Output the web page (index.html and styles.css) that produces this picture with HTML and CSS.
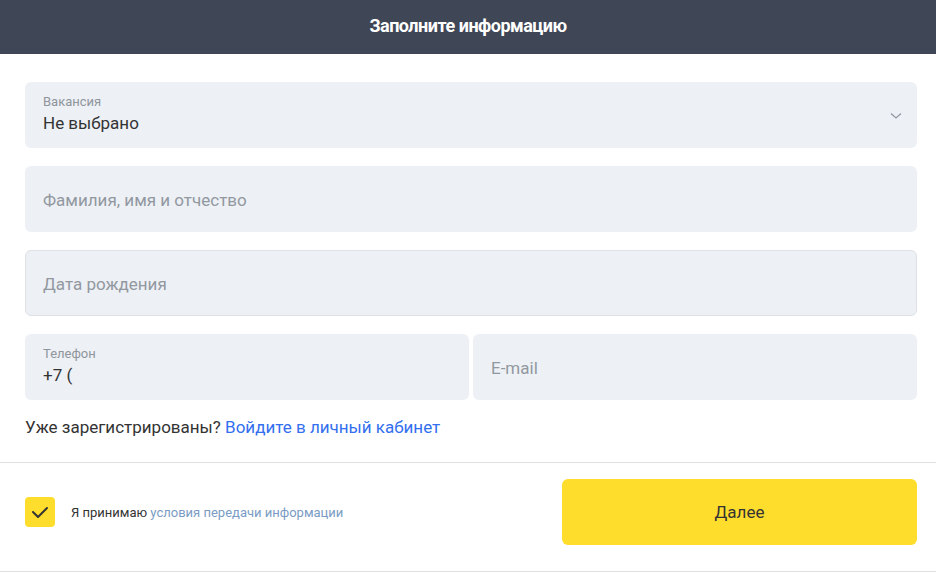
FILE: index.html
```html
<!DOCTYPE html>
<html lang="ru">
<head>
<meta charset="utf-8">
<link rel="stylesheet" href="styles.css">
</head>
<body>
<header class="top">Заполните информацию</header>
<main class="form">
  <div class="fields">
    <div class="field field-select">
      <div class="field-inner">
        <div class="label">Вакансия</div>
        <div class="value">Не выбрано</div>
      </div>
      <svg class="chev" width="12" height="8" viewBox="0 0 12 8"><path d="M1 1.5 L6 6 L11 1.5" fill="none" stroke="#9299a2" stroke-width="1.3"/></svg>
    </div>
    <div class="field"><div class="placeholder">Фамилия, имя и отчество</div></div>
    <div class="field field-bordered"><div class="placeholder">Дата рождения</div></div>
    <div class="row">
      <div class="field">
        <div class="field-inner">
          <div class="label">Телефон</div>
          <div class="value">+7 (</div>
        </div>
      </div>
      <div class="field"><div class="placeholder">E-mail</div></div>
    </div>
  </div>
  <p class="login">Уже зарегистрированы? <a class="link" href="#">Войдите в личный кабинет</a></p>
</main>
<footer class="bottom">
  <div class="agree">
    <span class="check"><svg width="18" height="14" viewBox="0 0 18 14"><path d="M2 7 L7 12 L16 3" fill="none" stroke="#333" stroke-width="2" stroke-linecap="round" stroke-linejoin="round"/></svg></span>
    <span class="agree-text">Я принимаю <a class="link-soft" href="#">условия передачи информации</a></span>
  </div>
  <button class="btn">Далее</button>
</footer>
</body>
</html>
```
FILE: styles.css
```css
* { box-sizing: border-box; }
html, body { margin: 0; padding: 0; background: #fff; }
body { font-family: Roboto, "Liberation Sans", Arial, sans-serif; color: #333; width: 936px; }
.top {
  height: 54px;
  background: #3f4656;
  color: #fff;
  font-weight: 700;
  font-size: 18px;
  letter-spacing: -0.5px;
  display: flex;
  align-items: center;
  justify-content: center;
  padding-bottom: 4px;
}
.form { padding: 28px 19px 0 25px; }
.fields { display: flex; flex-direction: column; gap: 18px; }
.field {
  height: 66px;
  background: #edf0f5;
  border-radius: 6px;
  display: flex;
  align-items: center;
  padding: 0 18px;
  position: relative;
}
.field-bordered { border: 1px solid #dde0e5; padding: 0 17px; }
.field-inner { display: flex; flex-direction: column; }
.label { font-size: 13px; color: #8f959c; line-height: 14px; margin-top: -2px; }
.value { font-size: 17px; color: #333; line-height: 20px; margin-top: 4px; }
.placeholder { font-size: 17px; color: #9298a0; margin-top: 2px; }
.field-select { justify-content: space-between; }
.chev { margin-right: -3px; margin-top: 1px; }
.row { display: flex; gap: 4px; }
.row .field { flex: 1; }
.login { margin: 17px 0 0; font-size: 17px; line-height: 20px; color: #333; height: 27px; }
.link { color: #336fee; text-decoration: none; }
.bottom {
  margin-top: 18px;
  border-top: 1px solid #dddfe1;
  border-bottom: 1px solid #dddfe1;
  height: 110px;
  display: flex;
  align-items: center;
  justify-content: space-between;
  padding: 0 19px 10px 25px;
}
.agree { display: flex; align-items: center; gap: 16px; }
.check {
  width: 30px; height: 30px;
  background: #ffdd2d;
  border-radius: 4px;
  display: flex; align-items: center; justify-content: center;
}
.agree-text { font-size: 13px; color: #333; }
.link-soft { color: #7a9cc4; text-decoration: none; }
.btn {
  width: 355px; height: 66px;
  background: #ffdd2d;
  border: 0;
  border-radius: 6px;
  font-family: Roboto, "Liberation Sans", Arial, sans-serif;
  font-size: 17px;
  color: #333;
}
```
